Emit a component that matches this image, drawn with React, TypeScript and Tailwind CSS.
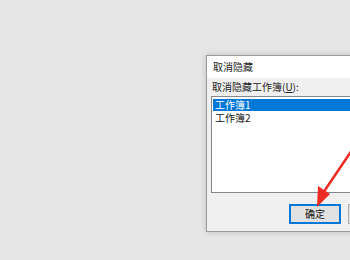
export default function App() {
  return (
    <div
      className="relative w-[350px] h-[260px] overflow-hidden bg-[#e6e6e6]"
      style={{ fontFamily: '"Noto Sans CJK SC", "Liberation Sans", sans-serif' }}
    >
      <div className="pl-[206px] pt-[55px]">
        <div className="w-[170px] h-[177px] flex flex-col border border-[#9a9a9a] bg-[#f0f0f0] shadow-[0_0_6px_rgba(0,0,0,0.18)]">
          {/* title bar */}
          <div className="h-[22px] shrink-0 bg-white flex items-center pl-[6px] text-[10px] leading-none text-[#222]">取消隐藏</div>
          {/* body */}
          <div className="flex-1 pl-[4px] pt-[2px] flex flex-col">
            <div className="h-[14px] flex items-center pl-[1px] text-[10px] leading-none text-[#222]">
              取消隐藏工作簿(<span className="underline">U</span>):
            </div>
            <div className="mt-[2px] h-[97px] shrink-0 bg-white border border-[#828790] pt-[2px] px-[1px] text-[10px] leading-none text-[#111]">
              <div className="h-[12px] flex items-center pl-[2px] bg-[#0078d7] text-white">工作簿1</div>
              <div className="h-[13px] flex items-center pl-[2px]">工作簿2</div>
            </div>
            <div className="mt-[11px] flex gap-[7px] pl-[78px]">
              <div className="w-[52px] h-[20px] shrink-0 flex items-center justify-center border-2 border-[#0078d7] bg-[#e1e1e1] text-[10px] leading-none text-[#111]">确定</div>
              <div className="w-[52px] h-[20px] shrink-0 border border-[#adadad] bg-[#e1e1e1]" />
            </div>
          </div>
        </div>
      </div>
      {/* red arrow overlay */}
      <svg className="absolute left-0 top-0" width="350" height="260" viewBox="0 0 350 260">
        <line x1="352" y1="150" x2="323" y2="193" stroke="#ee2a24" strokeWidth="2.5" strokeLinecap="round" />
        <polygon points="317,207 318,186 330,194" fill="#ee2a24" />
      </svg>
    </div>
  );
}
